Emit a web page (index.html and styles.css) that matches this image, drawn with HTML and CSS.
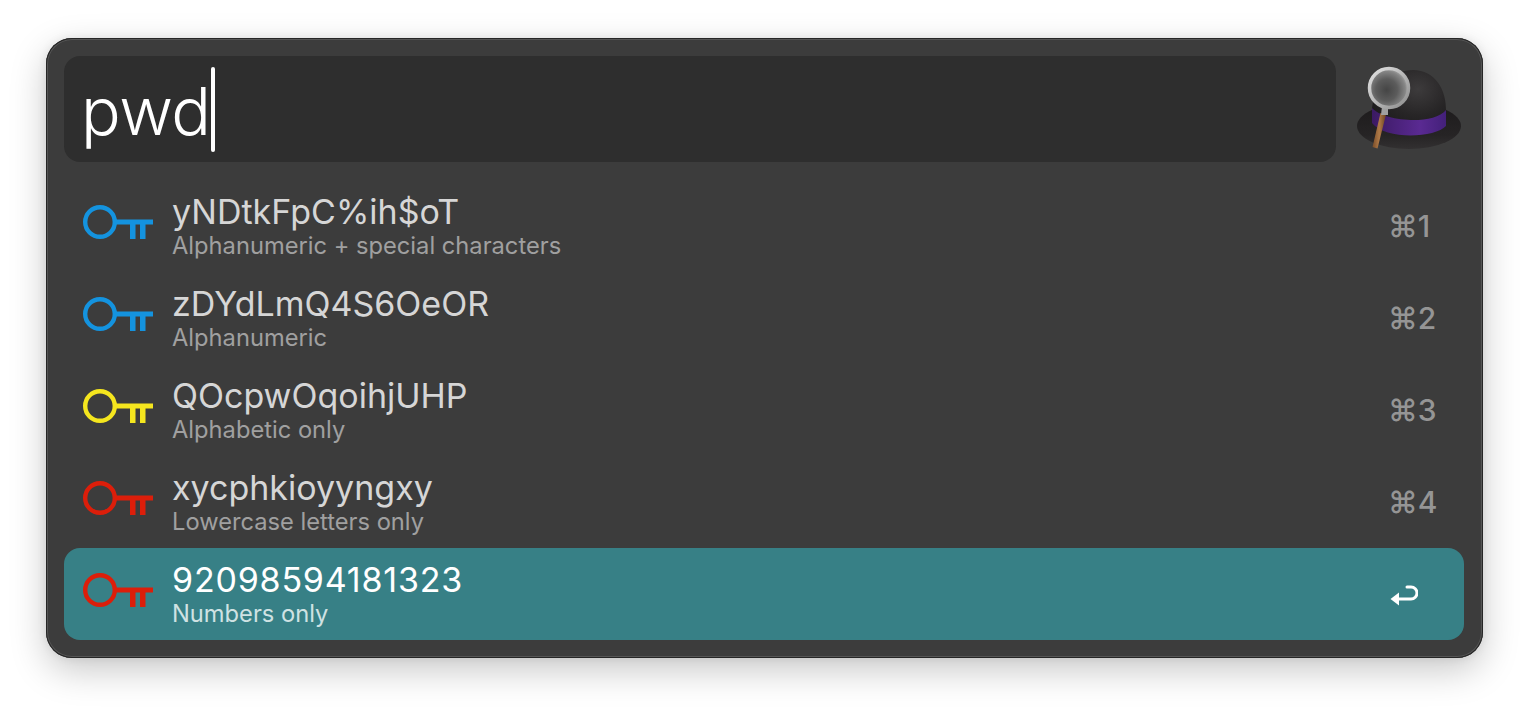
FILE: index.html
```html
<!DOCTYPE html>
<html lang="en">
<head>
<meta charset="utf-8">
<title>Alfred</title>
<link rel="stylesheet" href="styles.css">
</head>
<body>
<svg class="defs" width="0" height="0" aria-hidden="true">
  <symbol id="key" viewBox="0 0 72 36">
    <circle cx="18" cy="18" r="14.8" fill="none" stroke="currentColor" stroke-width="4.4"/>
    <path d="M34 15.6H71V20.4H34Z M48 20H53.500V35H48Z M58 20H63.500V35H58Z" fill="currentColor"/>
  </symbol>
</svg>
<main class="window">
  <div class="top">
    <div class="search"><span class="query">pwd</span><span class="caret"></span></div>
    <svg class="hat" viewBox="0 0 110 88" aria-hidden="true">
      <defs>
        <radialGradient id="crown" cx="0.62" cy="0.3" r="0.75">
          <stop offset="0" stop-color="#3d3b3c"/>
          <stop offset="0.55" stop-color="#272526"/>
          <stop offset="1" stop-color="#1a191a"/>
        </radialGradient>
        <linearGradient id="band" x1="0" y1="0" x2="1" y2="0">
          <stop offset="0" stop-color="#3b1a63"/>
          <stop offset="0.65" stop-color="#5a2a92"/>
          <stop offset="1" stop-color="#43207a"/>
        </linearGradient>
        <linearGradient id="brim" x1="0" y1="0" x2="0" y2="1">
          <stop offset="0" stop-color="#1c1a1b"/>
          <stop offset="0.7" stop-color="#262425"/>
          <stop offset="1" stop-color="#323031"/>
        </linearGradient>
        <radialGradient id="lens" cx="0.44" cy="0.55" r="0.56">
          <stop offset="0" stop-color="#454545"/>
          <stop offset="0.5" stop-color="#5c5c5c"/>
          <stop offset="0.85" stop-color="#858585"/>
          <stop offset="1" stop-color="#a8a8a8"/>
        </radialGradient>
        <linearGradient id="rim" x1="0" y1="0" x2="1" y2="1">
          <stop offset="0" stop-color="#e4e4e4"/>
          <stop offset="1" stop-color="#8d8d8d"/>
        </linearGradient>
        <linearGradient id="handle" x1="0" y1="0" x2="1" y2="0">
          <stop offset="0" stop-color="#7a4d28"/>
          <stop offset="0.5" stop-color="#b07a48"/>
          <stop offset="1" stop-color="#6b4220"/>
        </linearGradient>
      </defs>
      <ellipse cx="54" cy="60" rx="52" ry="23" fill="url(#brim)"/>
      <path d="M17 46C17 20 38 4 58 4C80 4 92 24 91 46C91 60 76 68 54 68C32 68 17 60 17 46Z" fill="url(#crown)"/>
      <path d="M17 42C28 55 78 60 91 44L91 60C80 72 30 74 17 57Z" fill="url(#band)"/>
      <path d="M25.500 47L31 48.500L22.500 82.500L17.500 81Z" fill="url(#handle)"/>
      <path d="M27 40H33V49H26Z" fill="#a0a0a0"/>
      <circle cx="34" cy="22" r="19.500" fill="url(#lens)" stroke="url(#rim)" stroke-width="3.500"/>
    </svg>
  </div>
  <ul class="results">
    <li class="row">
      <svg class="key blue"><use href="#key"/></svg>
      <div class="text"><div class="title">yNDtkFpC%ih$oT</div><div class="sub">Alphanumeric + special characters</div></div>
      <div class="shortcut">⌘1</div>
    </li>
    <li class="row">
      <svg class="key blue"><use href="#key"/></svg>
      <div class="text"><div class="title">zDYdLmQ4S6OeOR</div><div class="sub">Alphanumeric</div></div>
      <div class="shortcut">⌘2</div>
    </li>
    <li class="row">
      <svg class="key yellow"><use href="#key"/></svg>
      <div class="text"><div class="title">QOcpwOqoihjUHP</div><div class="sub">Alphabetic only</div></div>
      <div class="shortcut">⌘3</div>
    </li>
    <li class="row">
      <svg class="key red"><use href="#key"/></svg>
      <div class="text"><div class="title">xycphkioyyngxy</div><div class="sub">Lowercase letters only</div></div>
      <div class="shortcut">⌘4</div>
    </li>
    <li class="row selected">
      <svg class="key red"><use href="#key"/></svg>
      <div class="text"><div class="title">92098594181323</div><div class="sub">Numbers only</div></div>
      <svg class="enter" viewBox="0 0 28 22" aria-hidden="true">
        <path d="M17 2H21A6 6 0 0 1 21 14H6" fill="none" stroke="currentColor" stroke-width="3" stroke-linecap="round"/>
        <path d="M0.500 14L9 7.500V20.500Z" fill="currentColor"/>
      </svg>
    </li>
  </ul>
</main>
</body>
</html>
```
FILE: styles.css
```css
* { box-sizing: border-box; }
html, body { margin: 0; padding: 0; }
body {
  width: 1528px;
  height: 712px;
  background: #fff;
  overflow: hidden;
  padding: 38px 45px 54px 46px;
  font-family: Inter, "Liberation Sans", sans-serif;
}
.defs { display: block; }
.window {
  width: 1437px;
  height: 620px;
  background: #3c3c3c;
  border-radius: 26px;
  padding: 18px 19px 18px 18px;
  box-shadow: inset 0 0 0 1px #262626, inset 0 0 0 2px #555, 0 12px 36px rgba(0, 0, 0, 0.22), 0 0 10px rgba(0, 0, 0, 0.08);
  display: flex;
  flex-direction: column;
}
.top { display: flex; height: 106px; margin-bottom: 18px; }
.search {
  flex: none;
  width: 1272px;
  background: #2e2e2e;
  border-radius: 16px;
  padding-left: 17px;
  display: flex;
  align-items: center;
}
.query {
  color: #fff;
  font-size: 66px;
  font-weight: 350;
  line-height: 106px;
  letter-spacing: -0.400px;
  position: relative;
  top: 2px;
}
.caret { width: 4px; height: 85px; background: #fff; border-radius: 2px; }
.hat { width: 110px; height: 88px; margin-left: 19px; margin-top: 10px; flex: none; }
.results { list-style: none; margin: 0; padding: 0; }
.row {
  height: 92px;
  display: flex;
  align-items: center;
  padding-left: 18px;
  border-radius: 16px;
  color: #d6d6d6;
}
.selected { background: #378086; color: #fff; }
.key { width: 72px; height: 36px; margin-bottom: 8px; flex: none; }
.blue { color: #1493df; }
.yellow { color: #f5e61e; }
.red { color: #dc1e0a; }
.text { margin-left: 18px; flex: 1; margin-top: 1px; }
.title { font-size: 34px; line-height: 36px; }
.selected .title { letter-spacing: 0.8px; }
.sub { font-size: 23.700px; line-height: 27px; color: #a0a0a0; margin-top: 2px; }
.selected .sub { color: #cfe2e3; }
.shortcut { width: 76px; font-size: 30px; font-weight: 500; color: #959595; }
.enter { width: 28px; height: 22px; margin-right: 46px; margin-top: 3px; color: #fff; }
```
